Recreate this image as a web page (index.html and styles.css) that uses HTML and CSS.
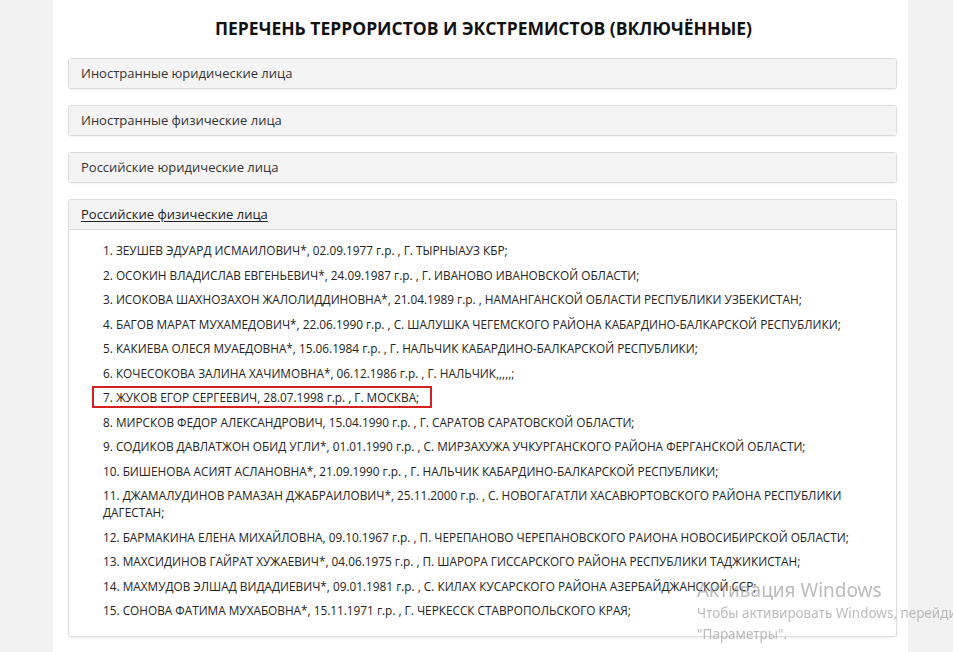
FILE: index.html
```html
<!DOCTYPE html>
<html lang="ru">
<head>
<meta charset="utf-8">
<title>Перечень террористов и экстремистов</title>
<link rel="stylesheet" href="styles.css">
</head>
<body>
<div class="page">
  <div class="container">
    <h1 class="title">ПЕРЕЧЕНЬ ТЕРРОРИСТОВ И ЭКСТРЕМИСТОВ (ВКЛЮЧЁННЫЕ)</h1>
    <div class="panel"><div class="panel-heading">Иностранные юридические лица</div></div>
    <div class="panel"><div class="panel-heading">Иностранные физические лица</div></div>
    <div class="panel"><div class="panel-heading">Российские юридические лица</div></div>
    <div class="panel">
      <div class="panel-heading open"><span class="link">Российские физические лица</span></div>
      <div class="panel-body">
        <p class="item">1. ЗЕУШЕВ ЭДУАРД ИСМАИЛОВИЧ*, 02.09.1977 г.р. , Г. ТЫРНЫАУЗ КБР;</p>
        <p class="item">2. ОСОКИН ВЛАДИСЛАВ ЕВГЕНЬЕВИЧ*, 24.09.1987 г.р. , Г. ИВАНОВО ИВАНОВСКОЙ ОБЛАСТИ;</p>
        <p class="item">3. ИСОКОВА ШАХНОЗАХОН ЖАЛОЛИДДИНОВНА*, 21.04.1989 г.р. , НАМАНГАНСКОЙ ОБЛАСТИ РЕСПУБЛИКИ УЗБЕКИСТАН;</p>
        <p class="item">4. БАГОВ МАРАТ МУХАМЕДОВИЧ*, 22.06.1990 г.р. , С. ШАЛУШКА ЧЕГЕМСКОГО РАЙОНА КАБАРДИНО-БАЛКАРСКОЙ РЕСПУБЛИКИ;</p>
        <p class="item">5. КАКИЕВА ОЛЕСЯ МУАЕДОВНА*, 15.06.1984 г.р. , Г. НАЛЬЧИК КАБАРДИНО-БАЛКАРСКОЙ РЕСПУБЛИКИ;</p>
        <p class="item">6. КОЧЕСОКОВА ЗАЛИНА ХАЧИМОВНА*, 06.12.1986 г.р. , Г. НАЛЬЧИК,,,,,;</p>
        <p class="item"><span class="marked">7. ЖУКОВ ЕГОР СЕРГЕЕВИЧ, 28.07.1998 г.р. , Г. МОСКВА;<span class="mark-box"></span></span></p>
        <p class="item">8. МИРСКОВ ФЕДОР АЛЕКСАНДРОВИЧ, 15.04.1990 г.р. , Г. САРАТОВ САРАТОВСКОЙ ОБЛАСТИ;</p>
        <p class="item">9. СОДИКОВ ДАВЛАТЖОН ОБИД УГЛИ*, 01.01.1990 г.р. , С. МИРЗАХУЖА УЧКУРГАНСКОГО РАЙОНА ФЕРГАНСКОЙ ОБЛАСТИ;</p>
        <p class="item">10. БИШЕНОВА АСИЯТ АСЛАНОВНА*, 21.09.1990 г.р. , Г. НАЛЬЧИК КАБАРДИНО-БАЛКАРСКОЙ РЕСПУБЛИКИ;</p>
        <p class="item">11. ДЖАМАЛУДИНОВ РАМАЗАН ДЖАБРАИЛОВИЧ*, 25.11.2000 г.р. , С. НОВОГАГАТЛИ ХАСАВЮРТОВСКОГО РАЙОНА РЕСПУБЛИКИ ДАГЕСТАН;</p>
        <p class="item">12. БАРМАКИНА ЕЛЕНА МИХАЙЛОВНА, 09.10.1967 г.р. , П. ЧЕРЕПАНОВО ЧЕРЕПАНОВСКОГО РАИОНА НОВОСИБИРСКОЙ ОБЛАСТИ;</p>
        <p class="item">13. МАХСИДИНОВ ГАЙРАТ ХУЖАЕВИЧ*, 04.06.1975 г.р. , П. ШАРОРА ГИССАРСКОГО РАЙОНА РЕСПУБЛИКИ ТАДЖИКИСТАН;</p>
        <p class="item">14. МАХМУДОВ ЭЛШАД ВИДАДИЕВИЧ*, 09.01.1981 г.р. , С. КИЛАХ КУСАРСКОГО РАЙОНА АЗЕРБАЙДЖАНСКОЙ ССР;</p>
        <p class="item">15. СОНОВА ФАТИМА МУХАБОВНА*, 15.11.1971 г.р. , Г. ЧЕРКЕССК СТАВРОПОЛЬСКОГО КРАЯ;</p>
      </div>
    </div>
  </div>
</div>
<div class="watermark">
  <div class="wm-title">Активация Windows</div>
  <div class="wm-text">Чтобы активировать Windows, перейдите в раздел</div>
  <div class="wm-text">"Параметры".</div>
</div>
</body>
</html>
```

FILE: styles.css
```css
html, body {
  margin: 0;
  padding: 0;
  height: 100%;
  overflow: hidden;
}
body {
  background: #f2f2f2;
  font-family: "Open Sans", "Noto Sans", sans-serif;
  color: #222;
}
.page {
  display: flex;
  padding-left: 53px;
  min-height: 100%;
}
.container {
  width: 855px;
  background: #fff;
  padding: 18px 11px 4px 15px;
  box-sizing: border-box;
}
.title {
  margin: 0 0 20px;
  text-align: center;
  font-size: 17.5px;
  line-height: 20px;
  font-weight: 700;
  color: #111;
  padding-left: 2px;
}
.panel {
  border: 1px solid #dcdcdc;
  border-radius: 3px;
  background: #fff;
  box-shadow: 0 1px 2px rgba(0,0,0,0.06);
  margin-bottom: 16px;
}
.panel-heading {
  background: #f4f4f4;
  padding: 6px 12px;
  font-size: 13px;
  line-height: 17px;
  color: #333;
}
.panel-heading.open {
  border-bottom: 1px solid #dcdcdc;
}
.link {
  text-decoration: underline;
  text-underline-offset: 2px;
  color: #222;
}
.panel-body {
  padding: 12px 15px 9px 34px;
}
.item {
  margin: 0 0 7.5px;
  font-size: 11.8px;
  line-height: 17px;
  color: #222;
}
.marked {
  position: relative;
  display: inline-block;
}
.mark-box {
  position: absolute;
  left: -11px;
  right: -13px;
  top: -3px;
  bottom: -2px;
  border: 2px solid #d42020;
}
.watermark {
  position: fixed;
  left: 697px;
  top: 577px;
  color: rgba(150,150,150,0.65);
  font-family: "Noto Sans", "Open Sans", sans-serif;
  white-space: nowrap;
  pointer-events: none;
}
.wm-title {
  font-size: 19px;
  line-height: 26px;
  font-weight: 400;
}
.wm-text {
  font-size: 13.5px;
  line-height: 21px;
}
```
